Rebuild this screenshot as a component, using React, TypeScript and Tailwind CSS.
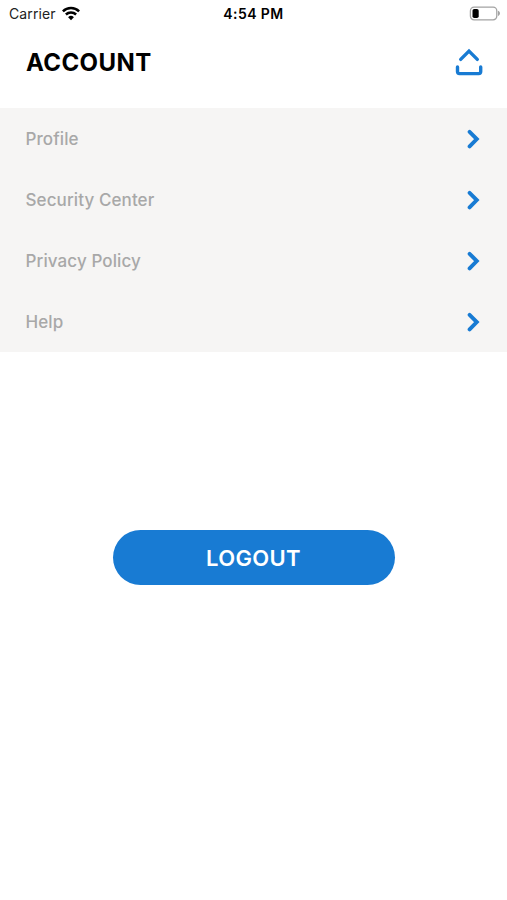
const items = ['Profile', 'Security Center', 'Privacy Policy', 'Help'];

function WifiIcon() {
  return (
    <svg className="ml-[6px] h-[15px] w-[18px]" viewBox="0 0 18 15" fill="none" stroke="#000" strokeWidth="2.5">
      <path d="M0.9 5.3a11.5 11.5 0 0 1 16.2 0" />
      <path d="M3.9 8.5a7.3 7.3 0 0 1 10.2 0" />
      <path d="M9 14.2 6.1 11.2a4.2 4.2 0 0 1 5.8 0z" fill="#000" stroke="none" />
    </svg>
  );
}

function BatteryIcon() {
  return (
    <svg className="h-[15px] w-[32px]" viewBox="0 0 32 15">
      <rect x="1.4" y="1.2" width="26.4" height="12.6" rx="3.7" fill="none" stroke="#a3a3a3" strokeWidth="1.3" />
      <rect x="3.5" y="2.9" width="6.2" height="9.2" rx="1.8" fill="#000" />
      <path d="M29 4.8c2.6 1 2.6 4.2 0 5.2z" fill="#a3a3a3" />
    </svg>
  );
}

function ShareIcon() {
  return (
    <svg
      className="h-[30px] w-[30px]"
      viewBox="0 0 30 30"
      fill="none"
      stroke="#187bd3"
      strokeWidth="3.4"
      strokeLinecap="round"
      strokeLinejoin="miter"
    >
      <path d="M6.7 12.4 15 4.1l8.3 8.3" />
      <path d="M3.5 20v4.6q0 2 2 2h19.2q2 0 2-2V20" />
    </svg>
  );
}

function Chevron() {
  return (
    <svg
      className="h-5 w-[14px]"
      viewBox="0 0 14 20"
      fill="none"
      stroke="#187bd3"
      strokeWidth="3.9"
      strokeLinecap="round"
    >
      <path d="M3.6 2.8 10.8 10l-7.2 7.4" />
    </svg>
  );
}

export default function App() {
  return (
    <div className="flex h-[900px] w-[507px] flex-col overflow-hidden bg-white font-['Inter',sans-serif]">
      <div className="grid h-[26px] grid-cols-3 items-center pr-[6px] pl-[9px] text-[14px] text-[#222]">
        <div className="flex items-center">
          <span className="tracking-[0.1px]">Carrier</span>
          <WifiIcon />
        </div>
        <span className="pr-[3px] text-center text-[14px] font-semibold tracking-[0.42px] text-black">4:54 PM</span>
        <div className="flex justify-end">
          <BatteryIcon />
        </div>
      </div>
      <header className="flex h-[82px] items-start justify-between pt-[21px] pr-[23px] pl-[26px]">
        <h1 className="pt-px text-[24px] leading-[30px] font-bold tracking-[0.4px] text-black">ACCOUNT</h1>
        <ShareIcon />
      </header>
      <nav className="flex h-[244px] flex-col bg-[#f6f5f4]">
        {items.map((label) => (
          <button key={label} className="flex h-[61px] items-center justify-between pr-[27px] pl-[25.5px]">
            <span className="pt-[2px] text-[17px] font-medium tracking-[0.1px] text-[#a8a8a8]">{label}</span>
            <Chevron />
          </button>
        ))}
      </nav>
      <button className="mt-[178px] h-[55px] w-[282px] self-center rounded-full bg-[#187bd3] pt-px text-[22px] font-semibold tracking-[0.35px] text-white">
        LOGOUT
      </button>
    </div>
  );
}
